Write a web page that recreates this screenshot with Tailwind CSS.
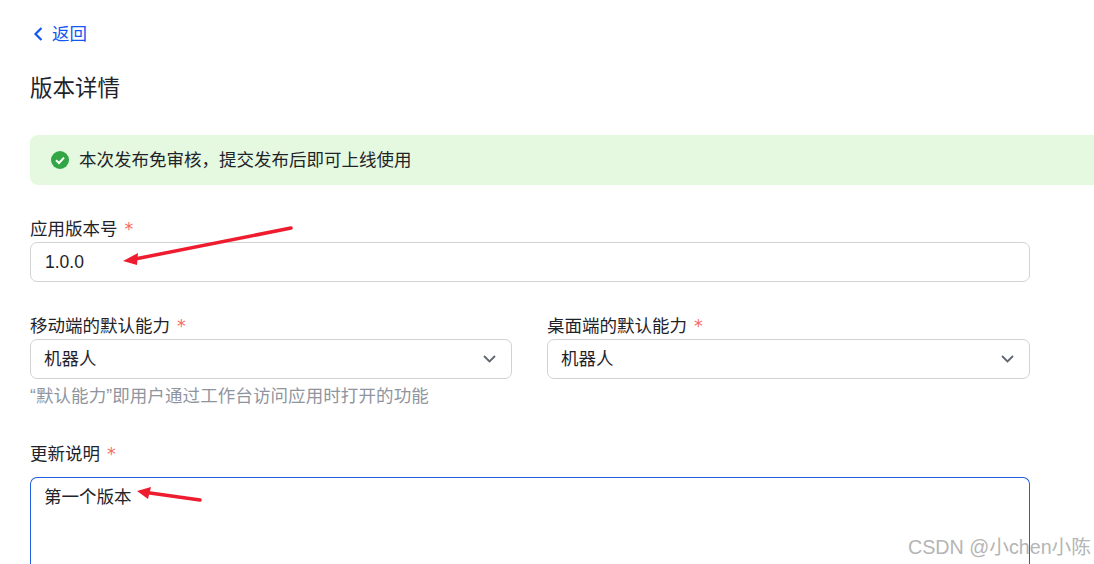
<!DOCTYPE html>
<html lang="zh-CN">
<head>
  <meta charset="UTF-8" />
  <title>版本详情</title>
  <script src="https://cdn.jsdelivr.net/npm/@tailwindcss/browser@4"></script>
</head>
<body class="relative h-[564px] w-[1094px] overflow-hidden bg-white font-['Liberation_Sans','Noto_Sans_CJK_SC',sans-serif] text-[17.5px] text-[#1f2329]">
  <div class="pl-[30px]">
    <!-- back link -->
    <a class="flex h-[24px] items-center gap-[6px] pt-[22px] box-content text-[#1456f0]">
      <svg class="ml-[3px] h-[14px] w-[13px]" viewBox="0 0 13 14" fill="none" stroke="#1456f0" stroke-width="2.2"><path d="M8.5 1 L2.5 7 L8.5 13" /></svg>
      <span class="leading-[24px]">返回</span>
    </a>
    <h1 class="mt-[27px] text-[22.5px] leading-[32px]">版本详情</h1>

    <!-- notice -->
    <div class="mt-[30px] flex h-[50px] items-center gap-[10px] rounded-l-[8px] bg-[#e4f9e0] pl-[21px]">
      <svg class="h-[18px] w-[18px]" viewBox="0 0 18 18"><circle cx="9" cy="9" r="9" fill="#32a645" /><path d="M5 9.3 L8 12 L13 6.6" fill="none" stroke="#fff" stroke-width="2" /></svg>
      <span>本次发布免审核，提交发布后即可上线使用</span>
    </div>

    <div class="w-[1000px]">
      <label class="mt-[32px] block h-[25px] leading-[24px]">应用版本号<span class="ml-[7px] font-['DejaVu_Sans'] text-[#f76964]">*</span></label>
      <div class="flex h-[40px] items-center rounded-[7px] border border-[#d0d3d6] px-[14px]">1.0.0</div>

      <div class="mt-[32px] grid grid-cols-[482px_483px] gap-x-[35px]">
        <div>
          <label class="block h-[25px] leading-[24px]">移动端的默认能力<span class="ml-[7px] font-['DejaVu_Sans'] text-[#f76964]">*</span></label>
          <div class="flex h-[40px] items-center justify-between rounded-[7px] border border-[#d0d3d6] pl-[13px] pr-[15px]">
            <span>机器人</span>
            <svg class="h-[8px] w-[13px]" viewBox="0 0 13 8" fill="none" stroke="#5f6670" stroke-width="1.8"><path d="M1 1 L6.5 6.5 L12 1" /></svg>
          </div>
        </div>
        <div>
          <label class="block h-[25px] leading-[24px]">桌面端的默认能力<span class="ml-[7px] font-['DejaVu_Sans'] text-[#f76964]">*</span></label>
          <div class="flex h-[40px] items-center justify-between rounded-[7px] border border-[#d0d3d6] pl-[13px] pr-[15px]">
            <span>机器人</span>
            <svg class="h-[8px] w-[13px]" viewBox="0 0 13 8" fill="none" stroke="#5f6670" stroke-width="1.8"><path d="M1 1 L6.5 6.5 L12 1" /></svg>
          </div>
        </div>
      </div>
      <p class="mt-[5px] h-[24px] leading-[24px] tracking-[0.09px] text-[#8f959e]">“默认能力”即用户通过工作台访问应用时打开的功能</p>

      <label class="mt-[34px] block h-[35px] leading-[24px]">更新说明<span class="ml-[7px] font-['DejaVu_Sans'] text-[#f76964]">*</span></label>
      <div class="h-[87px] rounded-t-[7px] border border-b-0 border-[#1f5fe0] px-[13px] pt-[7px] leading-[24px]">第一个版本</div>
    </div>
  </div>

  <!-- screenshot annotations -->
  <svg class="absolute left-0 top-0" width="1094" height="564" fill="none">
    <path d="M291 228 L135 259" stroke="#ee1c2e" stroke-width="3.5" stroke-linecap="round" />
    <path d="M123 261 L138 253 L137 265 Z" fill="#ee1c2e" />
    <path d="M200 500 L150 493" stroke="#ee1c2e" stroke-width="3.5" stroke-linecap="round" />
    <path d="M137 491 L151 487 L148 499 Z" fill="#ee1c2e" />
  </svg>
  <span class="absolute left-[908px] top-[535px] text-[19.7px] leading-[24px] text-[#b5b5b5]">CSDN @小chen小陈</span>
</body>
</html>
